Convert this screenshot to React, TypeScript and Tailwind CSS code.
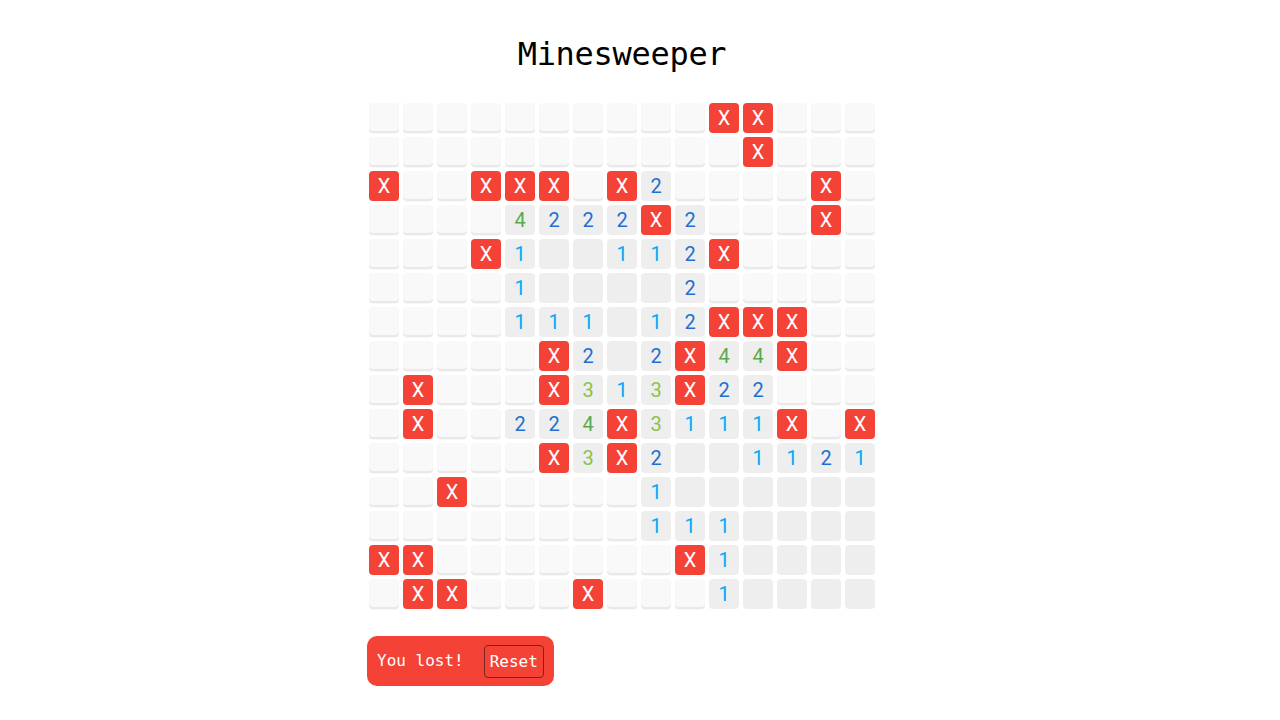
import React, { useState } from 'react';

// U = hidden, E = open empty, X = mine, 1-4 = count
const BOARD: string[] = [
  'UUUUUUUUUUXXUUU',
  'UUUUUUUUUUUXUUU',
  'XUUXXXUX2UUUUXU',
  'UUUU4222X2UUUXU',
  'UUUX1EE112XUUUU',
  'UUUU1EEEE2UUUUU',
  'UUUU111E12XXXUU',
  'UUUUUX2E2X44XUU',
  'UXUUUX313X22UUU',
  'UXUU224X3111XUX',
  'UUUUUX3X2EE1121',
  'UUXUUUUU1EEEEEE',
  'UUUUUUUU111EEEE',
  'XXUUUUUUUX1EEEE',
  'UXXUUUXUUU1EEEE',
];

const numberColors: Record<string, string> = {
  '1': 'text-[#03a9f4]',
  '2': 'text-[#1f6fd0]',
  '3': 'text-[#8bc34a]',
  '4': 'text-[#5aa94a]',
};

const Cell: React.FC<{ value: string }> = ({ value }) => {
  if (value === 'X') {
    return (
      <div className="w-[30px] h-[30px] rounded-[4px] bg-[#f44336] text-white flex items-center justify-center text-[20px]">
        X
      </div>
    );
  }
  if (value === 'U') {
    return (
      <div className="w-[30px] h-[30px] rounded-[4px] bg-[#f9f9f9] shadow-[inset_0_-2px_1px_#e8e8e8,0_1px_1px_rgba(0,0,0,0.03)]" />
    );
  }
  return (
    <div
      className={`w-[30px] h-[30px] rounded-[4px] bg-[#eeeeee] flex items-center justify-center text-[20px] ${
        numberColors[value] || ''
      }`}
    >
      {value === 'E' ? '' : value}
    </div>
  );
};

const App: React.FC = () => {
  const [board] = useState(BOARD);

  return (
    <div className="min-h-screen bg-white flex justify-center pr-9 pt-[30px]">
      <div className="w-[510px] flex flex-col">
        <h1 className="text-[32px] leading-[48px] text-center text-black font-['DejaVu_Sans_Mono',monospace] tracking-[-0.3px]">
          Minesweeper
        </h1>

        <div className="mt-[25px] ml-[2px] grid grid-cols-[repeat(15,30px)] gap-[4px] font-['Roboto',sans-serif]">
          {board.map((row, r) =>
            row.split('').map((value, c) => <Cell key={`${r}-${c}`} value={value} />)
          )}
        </div>

        <div className="mt-[27px] self-start flex items-center gap-5 bg-[#f44336] rounded-[10px] px-[10px] h-[50px] text-white text-[16px] font-['DejaVu_Sans_Mono',monospace]">
          <span>You lost!</span>
          <button
            type="button"
            className="border border-[#7b2520] rounded-[4px] px-[5px] h-[33px] leading-[31px] text-white bg-[#f44336]"
          >
            Reset
          </button>
        </div>
      </div>
    </div>
  );
};

export default App;
